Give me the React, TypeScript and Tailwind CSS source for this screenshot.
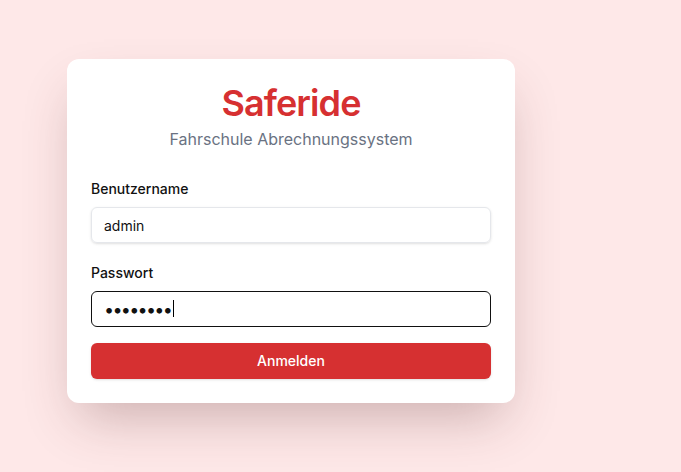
import { useState } from "react";

export default function App() {
  const [username, setUsername] = useState("admin");
  const [password, setPassword] = useState("password");

  return (
    <div className="min-h-screen w-full bg-[#fee8e8] pl-[67px] pt-[59px] font-['Inter',sans-serif]">
      {/* Login card */}
      <div className="w-[448px] rounded-xl bg-white p-6 shadow-2xl shadow-[#5a2a2a]/30">
        <div className="mb-[28px] text-center">
          <h1 className="text-4xl font-semibold leading-10 tracking-tight text-[#d63031]">Saferide</h1>
          <p className="mt-1 text-base leading-6 text-gray-500">Fahrschule Abrechnungssystem</p>
        </div>

        <form onSubmit={(e) => e.preventDefault()}>
          <label className="mb-2 block text-sm font-medium leading-5 text-[#111]">Benutzername</label>
          <input
            value={username}
            onChange={(e) => setUsername(e.target.value)}
            className="h-9 w-full rounded-md border border-gray-200 px-3 text-sm text-[#111] shadow-sm outline-none"
          />

          <label className="mb-2 mt-5 block text-sm font-medium leading-5 text-[#111]">Passwort</label>
          <div className="relative">
            <input
              type="password"
              value={password}
              onChange={(e) => setPassword(e.target.value)}
              className="h-9 w-full rounded-md border-[1.5px] border-[#111] px-3 text-[18px] tracking-[-1.75px] text-[#111] outline-none"
            />
            {/* caret of focused field */}
            <span className="absolute left-[82px] top-[9px] h-[17px] w-px bg-black" />
          </div>

          <button
            type="submit"
            className="mt-4 h-9 w-full rounded-md bg-[#d63031] text-sm font-medium text-white shadow-sm"
          >
            Anmelden
          </button>
        </form>
      </div>
    </div>
  );
}
